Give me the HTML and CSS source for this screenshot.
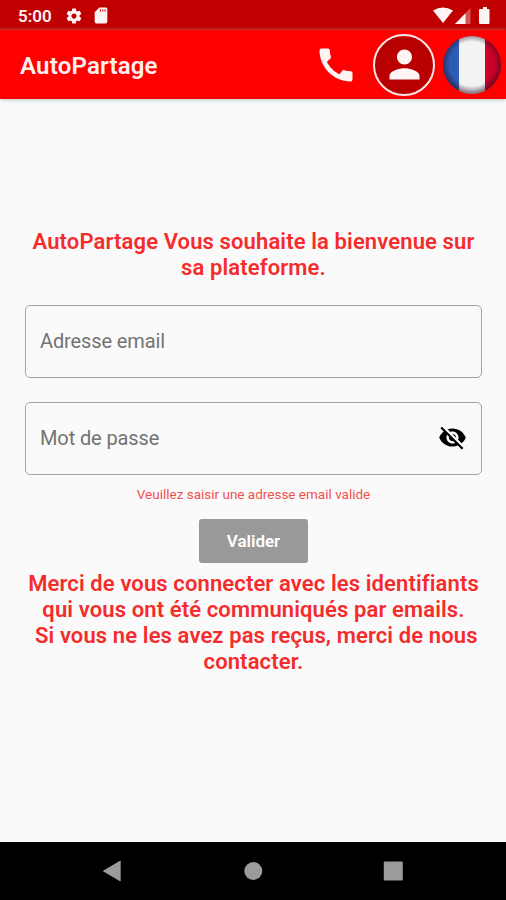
FILE: index.html
```html
<!DOCTYPE html>
<html lang="fr">
<head>
<meta charset="utf-8">
<title>AutoPartage</title>
<link rel="stylesheet" href="styles.css">
</head>
<body>
<div class="status">
  <span class="clock">5:00</span>
  <svg class="gear" viewBox="0 0 24 24"><path d="M19.43 12.98c.04-.32.07-.64.07-.98s-.03-.66-.07-.98l2.11-1.65c.19-.15.24-.42.12-.64l-2-3.46c-.12-.22-.39-.3-.61-.22l-2.49 1c-.52-.4-1.08-.73-1.69-.98l-.38-2.65C14.46 2.18 14.25 2 14 2h-4c-.25 0-.46.18-.49.42l-.38 2.65c-.61.25-1.17.59-1.69.98l-2.49-1c-.23-.09-.49 0-.61.22l-2 3.46c-.13.22-.07.49.12.64l2.11 1.65c-.04.32-.07.65-.07.98s.03.66.07.98l-2.11 1.65c-.19.15-.24.42-.12.64l2 3.46c.12.22.39.3.61.22l2.49-1c.52.4 1.08.73 1.69.98l.38 2.65c.03.24.24.42.49.42h4c.25 0 .46-.18.49-.42l.38-2.65c.61-.25 1.17-.59 1.69-.98l2.49 1c.23.09.49 0 .61-.22l2-3.46c.12-.22.07-.49-.12-.64l-2.11-1.65zM12 15.5c-1.93 0-3.5-1.57-3.5-3.5s1.57-3.5 3.5-3.5 3.5 1.57 3.5 3.5-1.57 3.5-3.5 3.5z"/></svg>
  <svg class="card" viewBox="0 0 24 24"><path d="M18 2h-8L4.02 8 4 20c0 1.1.9 2 2 2h12c1.100 0 2-.9 2-2V4c0-1.100-.9-2-2-2zm-6 5h-1.500V4.500H12V7zm3 0h-1.500V4.500H15V7zm3 0h-1.500V4.500H18V7z"/></svg>
  <svg class="signals" viewBox="0 0 58 18"><path d="M0 3.500Q10 -2.300 20 3.500L10 16z"/><path opacity=".35" d="M37.500 1v16H22z"/><path d="M32.500 6.200V17H22z"/><path d="M49 2h1V0h4v2h1.500q1 0 1 1v13q0 1-1 1H47q-1 0-1-1V3q0-1 1-1z"/></svg>
</div>
<header class="appbar">
  <h1>AutoPartage</h1>
  <svg class="phone" viewBox="0 0 24 24"><path d="M20.010 15.380c-1.230 0-2.420-.2-3.530-.56-.35-.12-.74-.03-1.010.24l-1.570 1.970c-2.830-1.350-5.480-3.900-6.890-6.830l1.950-1.660c.27-.28.35-.67.24-1.020-.37-1.110-.56-2.300-.56-3.530 0-.54-.45-.99-.99-.99H4.190C3.650 3 3 3.240 3 3.990 3 13.280 10.730 21 20.010 21c.71 0 .99-.63.99-1.180v-3.450c0-.54-.45-.99-.99-.99z"/></svg>
  <span class="account"><svg viewBox="0 0 24 24"><path d="M12 12c2.210 0 4-1.790 4-4s-1.790-4-4-4-4 1.790-4 4 1.790 4 4 4zm0 2c-2.670 0-8 1.340-8 4v2h16v-2c0-2.660-5.330-4-8-4z"/></svg></span>
  <span class="flag"></span>
</header>
<main>
  <p class="message welcome">AutoPartage Vous souhaite la bienvenue sur<br>sa plateforme.</p>
  <div class="field"><span class="label">Adresse email</span></div>
  <div class="field password"><span class="label">Mot de passe</span>
    <svg class="eye" viewBox="0 0 24 24"><path d="M12 7c2.760 0 5 2.240 5 5 0 .65-.13 1.260-.36 1.830l2.920 2.920c1.510-1.260 2.700-2.890 3.430-4.750-1.730-4.390-6-7.500-11-7.500-1.400 0-2.740.25-3.980.7l2.160 2.160C10.740 7.130 11.350 7 12 7zM2 4.270l2.280 2.280.46.46C3.080 8.300 1.780 10.020 1 12c1.730 4.390 6 7.500 11 7.500 1.550 0 3.030-.3 4.380-.84l.42.42L19.730 22 21 20.730 3.270 3 2 4.270zM7.530 9.800l1.550 1.550c-.05.21-.08.43-.08.65 0 1.660 1.340 3 3 3 .22 0 .44-.03.65-.08l1.550 1.550c-.67.33-1.410.53-2.200.53-2.760 0-5-2.240-5-5 0-.79.2-1.530.53-2.200zm4.310-.78l3.150 3.150.02-.16c0-1.660-1.340-3-3-3l-.17.01z"/></svg>
  </div>
  <p class="error">Veuillez saisir une adresse email valide</p>
  <button class="submit" type="button">Valider</button>
  <p class="message help">Merci de vous connecter avec les identifiants<br>qui vous ont été communiqués par emails.<br>&nbsp;Si vous ne les avez pas reçus, merci de nous<br>contacter.</p>
</main>
<nav class="navbar">
  <svg viewBox="0 0 24 24"><path d="M1.600 12 19 1.800q.7-.3.700.5v19.400q0 .8-.7.500z"/></svg>
  <svg viewBox="0 0 24 24"><circle cx="12.300" cy="12" r="9"/></svg>
  <svg viewBox="0 0 24 24"><rect x="2.800" y="2.500" width="19" height="19" rx="1"/></svg>
</nav>
</body>
</html>
```

FILE: styles.css
```css
* { box-sizing: border-box; }
body {
  margin: 0;
  height: 900px;
  display: flex;
  flex-direction: column;
  background: #fafafa;
  font-family: Roboto, "Liberation Sans", sans-serif;
  overflow: hidden;
}
h1, p { margin: 0; }
svg { display: block; flex: none; }
.status {
  height: 30px;
  flex: none;
  display: flex;
  align-items: center;
  padding: 1px 15px 0 18px;
  background: #c00000;
  color: #fff0f0;
  fill: #fff5f5;
}
.clock { width: 47px; font-size: 17px; font-weight: 600; }
.gear { width: 18px; height: 18px; }
.card { width: 20px; height: 19px; margin-left: 8px; }
.signals { width: 58px; height: 18px; margin-left: auto; }
.appbar {
  height: 69px;
  flex: none;
  display: flex;
  align-items: center;
  padding: 0 5px 0 20px;
  background: #ff0000;
  box-shadow: 0 1px 4px #b8c8c8;
}
.appbar h1 {
  flex: 1;
  color: #fff0f0;
  font-size: 24px;
  font-weight: 600;
  letter-spacing: .2px;
  line-height: 28px;
  margin-top: 2px;
}
.phone { width: 44px; height: 44px; fill: #fff5f5; margin-right: 15px; }
.account {
  width: 62px;
  height: 62px;
  border: 2px solid #ffe8e8;
  border-radius: 50%;
  background: #b80000;
  display: flex;
  align-items: center;
  justify-content: center;
}
.account svg { width: 45px; height: 45px; fill: #fff5f5; }
.flag {
  width: 58px;
  height: 58px;
  margin-left: 8px;
  border-radius: 50%;
  background:
    radial-gradient(circle closest-side at 50% 48%, transparent 80%, rgba(40, 10, 30, .5) 104%),
    linear-gradient(90deg, #2c5cb4 0 27%, #f3f3f3 27% 73%, #cc0028 73%);
}
main {
  flex: 1;
  display: flex;
  flex-direction: column;
  align-items: center;
  padding: 130px 24px 0 25px;
}
.message {
  color: #f52c2c;
  font-size: 22px;
  font-weight: 570;
  letter-spacing: .12px;
  line-height: 26px;
  text-align: center;
  white-space: nowrap;
}
.field {
  width: 100%;
  height: 73px;
  margin-top: 24px;
  padding: 0 14px 2px;
  display: flex;
  align-items: center;
  justify-content: space-between;
  border: 1px solid #a4a4a4;
  border-radius: 5px;
}
.label { color: #737373; font-size: 20px; letter-spacing: -.12px; }
.eye { width: 29px; height: 29px; fill: #000; }
.error {
  margin-top: 10px;
  color: #ef5350;
  font-size: 13.5px;
  line-height: 18px;
}
.submit {
  width: 109px;
  height: 44px;
  margin-top: 16px;
  border: 0;
  border-radius: 3px;
  background: #999;
  color: #fff;
  font: 600 17px/20px Roboto, sans-serif;
}
.help { margin-top: 8px; }
.navbar {
  height: 58px;
  flex: none;
  display: flex;
  align-items: center;
  justify-content: center;
  gap: 116px;
  background: #000;
  fill: #9b9b9b;
}
.navbar svg { width: 24px; height: 24px; }
```
